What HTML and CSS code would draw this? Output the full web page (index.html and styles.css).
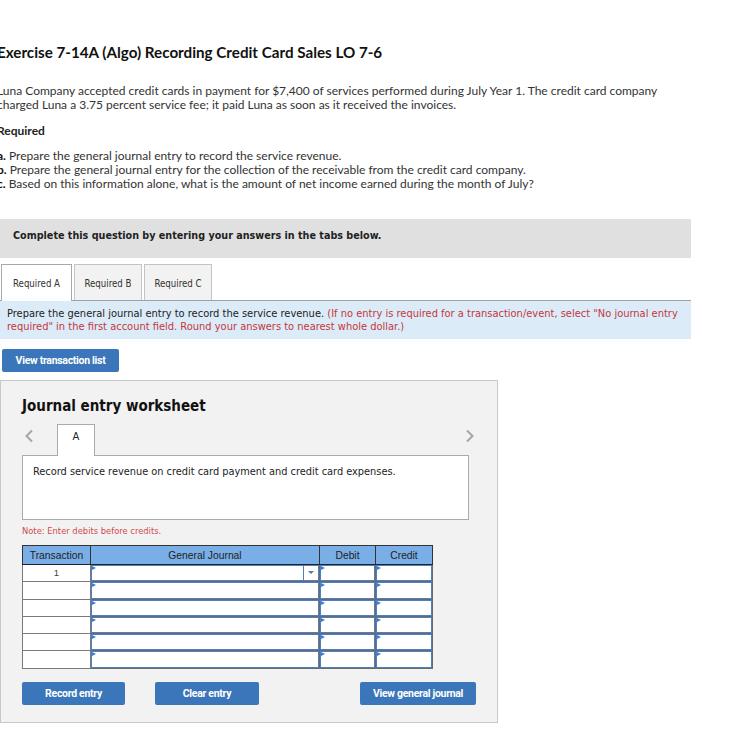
FILE: index.html
```html
<!DOCTYPE html>
<html>
<head>
<meta charset="utf-8">
<link rel="stylesheet" href="styles.css">
</head>
<body>
<div class="page">
  <h1 class="title">Exercise 7-14A (Algo) Recording Credit Card Sales LO 7-6</h1>
  <p class="intro">Luna Company accepted credit cards in payment for $7,400 of services performed during July Year 1. The credit card company<br>charged Luna a 3.75 percent service fee; it paid Luna as soon as it received the invoices.</p>
  <p class="req-head">Required</p>
  <div class="req-list">
    <div><b>a.</b> Prepare the general journal entry to record the service revenue.</div>
    <div><b>b.</b> Prepare the general journal entry for the collection of the receivable from the credit card company.</div>
    <div><b>c.</b> Based on this information alone, what is the amount of net income earned during the month of July?</div>
  </div>

  <div class="complete-bar">Complete this question by entering your answers in the tabs below.</div>

  <div class="tabs">
    <div class="tab active">Required A</div>
    <div class="tab">Required B</div>
    <div class="tab">Required C</div>
  </div>
  <div class="instr">Prepare the general journal entry to record the service revenue. <span class="red">(If no entry is required for a transaction/event, select "No journal entry required" in the first account field. Round your answers to nearest whole dollar.)</span></div>

  <button class="btn btn-view">View transaction list</button>

  <div class="worksheet">
    <h2 class="ws-title">Journal entry worksheet</h2>
    <div class="ws-nav">
      <svg class="chev" width="10" height="14" viewBox="0 0 10 14"><polyline points="8,1.5 2.5,7 8,12.5" fill="none" stroke="#a6a6a6" stroke-width="2"/></svg>
      <div class="ws-tab">A</div>
      <div class="spacer"></div>
      <svg class="chev chev-r" width="10" height="14" viewBox="0 0 10 14"><polyline points="2,1.5 7.5,7 2,12.5" fill="none" stroke="#a6a6a6" stroke-width="2"/></svg>
    </div>
    <div class="desc">Record service revenue on credit card payment and credit card expenses.</div>
    <div class="note">Note: Enter debits before credits.</div>

    <table class="je">
      <colgroup><col class="c-tr"><col class="c-gj"><col class="c-dr"><col class="c-cr"></colgroup>
      <thead>
        <tr><th>Transaction</th><th>General Journal</th><th>Debit</th><th>Credit</th></tr>
      </thead>
      <tbody>
        <tr><td class="tr">1</td><td class="in"><div class="box sel"><i class="flag"></i><span class="drop"><i class="caret"></i></span></div></td><td class="in"><div class="box"><i class="flag"></i></div></td><td class="in"><div class="box"><i class="flag"></i></div></td></tr>
        <tr><td class="tr"></td><td class="in"><div class="box"><i class="flag"></i></div></td><td class="in"><div class="box"><i class="flag"></i></div></td><td class="in"><div class="box"><i class="flag"></i></div></td></tr>
        <tr><td class="tr"></td><td class="in"><div class="box"><i class="flag"></i></div></td><td class="in"><div class="box"><i class="flag"></i></div></td><td class="in"><div class="box"><i class="flag"></i></div></td></tr>
        <tr><td class="tr"></td><td class="in"><div class="box"><i class="flag"></i></div></td><td class="in"><div class="box"><i class="flag"></i></div></td><td class="in"><div class="box"><i class="flag"></i></div></td></tr>
        <tr><td class="tr"></td><td class="in"><div class="box"><i class="flag"></i></div></td><td class="in"><div class="box"><i class="flag"></i></div></td><td class="in"><div class="box"><i class="flag"></i></div></td></tr>
        <tr><td class="tr"></td><td class="in"><div class="box"><i class="flag"></i></div></td><td class="in"><div class="box"><i class="flag"></i></div></td><td class="in"><div class="box"><i class="flag"></i></div></td></tr>
      </tbody>
    </table>

    <div class="ws-buttons">
      <button class="btn btn-rec">Record entry</button>
      <button class="btn btn-clr">Clear entry</button>
      <div class="spacer"></div>
      <button class="btn btn-gen">View general journal</button>
    </div>
  </div>
</div>
</body>
</html>
```

FILE: styles.css
```css
html, body { margin: 0; padding: 0; background: #fff; }
.page {
  margin-left: -3px;
  width: 694px;
  padding-top: 43px;
  font-family: Lato, "Open Sans", sans-serif;
  color: #222;
}
.title {
  margin: 0;
  font-size: 15.2px;
  font-weight: 700;
  line-height: 18px;
  color: #111;
}
.intro {
  margin: 23px 0 0 0;
  font-size: 12px;
  line-height: 13.5px;
  color: #333;
}
.req-head {
  margin: 13px 0 0 0;
  font-size: 12px;
  font-weight: 700;
  line-height: 14px;
  color: #222;
}
.req-list {
  margin-top: 11px;
  font-size: 12px;
  line-height: 14px;
  color: #333;
}
.req-list b { font-weight: 700; color: #111; }

.complete-bar {
  margin-top: 28px;
  margin-left: 3px;
  height: 39px;
  background: #e0e0e0;
  box-sizing: border-box;
  padding: 10px 0 0 13px;
  font-family: "DejaVu Sans Condensed", "DejaVu Sans", sans-serif;
  font-size: 10.7px;
  font-weight: 700;
  color: #222;
}

.tabs {
  display: flex;
  margin-top: 6px;
  margin-left: 4px;
  height: 36px;
  gap: 2px;
}
.tab {
  width: 68px;
  box-sizing: border-box;
  border: 1px solid #c4c4c4;
  border-bottom: none;
  background: #f2f2f2;
  font-family: "DejaVu Sans Condensed", "DejaVu Sans", sans-serif;
  font-size: 9.6px;
  color: #333;
  text-align: center;
  padding-top: 13px;
}
.tab.active {
  width: 71px;
  background: #fff;
  border-color: #a8a8a8;
  position: relative;
  z-index: 1;
  height: 37px;
}

.instr {
  margin-left: 3px;
  background: #dcebf8;
  border-top: 1px solid #a0a0a0;
  height: 39px;
  box-sizing: border-box;
  padding: 6px 6px 0 7px;
  font-family: "DejaVu Sans Condensed", "DejaVu Sans", sans-serif;
  font-size: 11px;
  line-height: 13px;
  color: #222;
}
.red { color: #c4373c; }

.btn {
  display: block;
  border: none;
  border-radius: 2px;
  background: #3a76b9;
  color: #fff;
  font-family: "Liberation Sans Narrow", Roboto, sans-serif;
  font-weight: 700;
  font-size: 10.5px;
  letter-spacing: -0.3px;
  height: 23px;
  padding: 0;
  cursor: pointer;
}
.btn-view {
  margin: 10px 0 0 5px;
  width: 117px;
}

.worksheet {
  margin: 8px 0 0 3px;
  width: 498px;
  box-sizing: border-box;
  border: 1px solid #c8c8c8;
  background: #f2f2f2;
  padding: 0 0 17px 21px;
}
.ws-title {
  margin: 16px 0 0 0;
  font-family: "DejaVu Sans Condensed", "DejaVu Sans", sans-serif;
  font-size: 15px;
  font-weight: 700;
  color: #111;
  line-height: 18px;
}
.ws-nav {
  display: flex;
  align-items: flex-start;
  margin-top: 9px;
  width: 453px;
}
.chev { margin: 5px 0 0 2px; }
.chev-r { margin: 5px 0 0 0; }
.ws-tab {
  margin-left: 23px;
  width: 38px;
  height: 32px;
  box-sizing: border-box;
  border: 1px solid #aaa;
  border-bottom: none;
  background: #fff;
  font-family: "DejaVu Sans", sans-serif;
  font-size: 10px;
  text-align: center;
  padding-top: 6px;
  color: #222;
  position: relative;
  z-index: 1;
  margin-bottom: -1px;
}
.spacer { flex: 1; }
.desc {
  width: 447px;
  height: 65px;
  box-sizing: border-box;
  border: 1px solid #aaa;
  background: #fff;
  padding: 9px 0 0 10px;
  font-family: "DejaVu Sans Condensed", "DejaVu Sans", sans-serif;
  font-size: 10.9px;
  color: #222;
}
.note {
  margin-top: 5px;
  font-family: "DejaVu Sans Condensed", "DejaVu Sans", sans-serif;
  font-size: 9.3px;
  color: #d04a4a;
  line-height: 11px;
}

.je {
  margin-top: 9px;
  width: 410px;
  table-layout: fixed;
  border-collapse: collapse;
  border: 1.5px solid #666;
  font-family: "Liberation Sans", Arial, sans-serif;
  font-size: 10.3px;
}
.je th {
  background: #7aaee6;
  font-weight: 400;
  color: #222;
  height: 18px;
  padding: 0;
  border: 1px solid #333;
  border-bottom: 1.5px solid #222;
}
.c-tr { width: 68px; }
.c-gj { width: 229px; }
.c-dr { width: 56px; }
.c-cr { width: 57px; }
.je td {
  padding: 0;
  background: #fff;
  border: 1px solid #7a7a7a;
}
.je td.tr {
  text-align: center;
  color: #444;
  font-size: 9.5px;
  vertical-align: middle;
  line-height: 10px;
}
.je td.in { border: 1px solid #6a6a6a; }
.box {
  position: relative;
  height: 16.3px;
  box-sizing: border-box;
  border: 1.5px solid #4e7fc0;
  border-top-width: 1px;
  background: #fff;
}
.flag {
  position: absolute;
  left: 0;
  top: 0;
  width: 0;
  height: 0;
  border-top: 2.5px solid transparent;
  border-bottom: 2.5px solid transparent;
  border-left: 4px solid #3d7ad0;
}
.drop {
  position: absolute;
  right: 0;
  top: 0;
  bottom: 0;
  width: 14px;
  border-left: 1px solid #4e7fc0;
}
.caret {
  position: absolute;
  left: 4px;
  top: 5px;
  width: 0;
  height: 0;
  border-left: 3px solid transparent;
  border-right: 3px solid transparent;
  border-top: 3.5px solid #5577aa;
}

.ws-buttons {
  display: flex;
  margin-top: 13px;
  width: 454px;
}
.btn-rec { width: 103px; }
.btn-clr { width: 104px; margin-left: 30px; }
.btn-gen { width: 116px; }
```
